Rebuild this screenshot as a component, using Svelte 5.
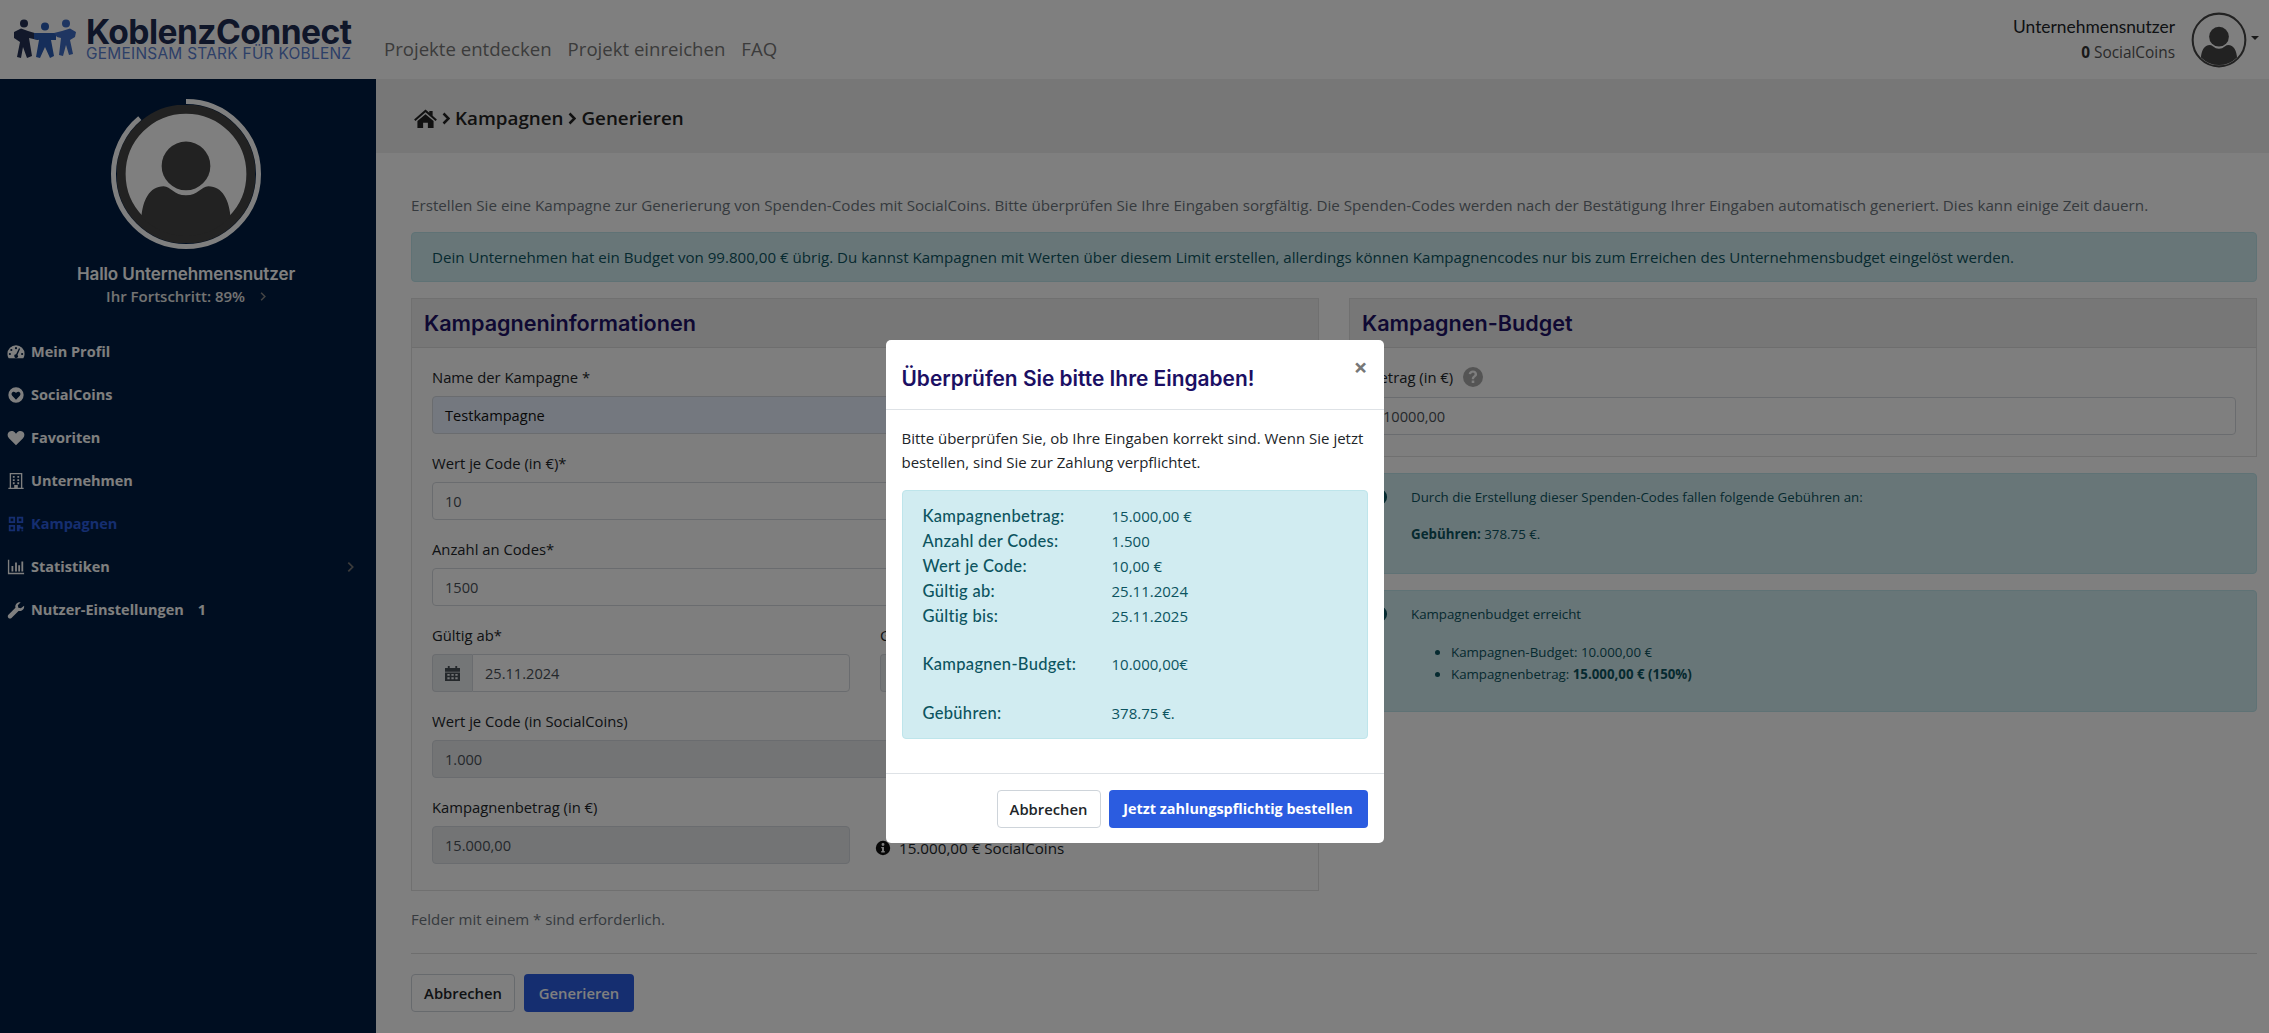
<script>
  const menu = [
    { label: 'Mein Profil', icon: 'gauge' },
    { label: 'SocialCoins', icon: 'coin' },
    { label: 'Favoriten', icon: 'heart' },
    { label: 'Unternehmen', icon: 'building' },
    { label: 'Kampagnen', icon: 'qr', active: true },
    { label: 'Statistiken', icon: 'chart', chevron: true },
    { label: 'Nutzer-Einstellungen', icon: 'wrench', badge: '1' }
  ];
  const summary = [
    ['Kampagnenbetrag:', '15.000,00 €'],
    ['Anzahl der Codes:', '1.500'],
    ['Wert je Code:', '10,00 €'],
    ['Gültig ab:', '25.11.2024'],
    ['Gültig bis:', '25.11.2025'],
    null,
    ['Kampagnen-Budget:', '10.000,00€'],
    null,
    ['Gebühren:', '378.75 €.']
  ];
</script>

{#snippet person(size, ring)}
  <svg width={size} height={size} viewBox="-68 -68 136 136" class="person">
    <defs>
      <clipPath id="pc{size}"><circle r="61" /></clipPath>
    </defs>
    <circle r="64" fill="#fff" stroke="#444" stroke-width={ring} />
    <g clip-path="url(#pc{size})" fill="#444">
      <circle cx="0" cy="-8" r="24" />
      <path d="M-44 44C-43 26 -36 12 -22 12C-15 12 -12 21 0 21C12 21 15 12 22 12C36 12 43 26 44 44L44 70L-44 70Z" />
    </g>
  </svg>
{/snippet}

{#snippet icon(name)}
  <svg class="mi" viewBox="0 0 20 20" fill="currentColor">
    {#if name === 'gauge'}
      <path fill-rule="evenodd" d="M10 2.5A9.5 9.5 0 0 0 .5 12c0 1.9.5 3.6 1.4 5h16.2c.9-1.4 1.4-3.1 1.4-5A9.500 9.500 0 0 0 10 2.500ZM10 4.500a1.200 1.200 0 1 1 0 2.400 1.200 1.200 0 0 1 0-2.400ZM4.800 6.600a1.200 1.200 0 1 1 0 2.400 1.200 1.200 0 0 1 0-2.400ZM3.200 11a1.200 1.200 0 1 1 0 2.400 1.200 1.200 0 0 1 0-2.400ZM16.800 11a1.200 1.200 0 1 1 0 2.400 1.200 1.200 0 0 1 0-2.400ZM14.600 6.400 11.600 13.200a2 2 0 1 1-1.500-.6l3.200-6.800Z" />
    {:else if name === 'coin'}
      <path fill-rule="evenodd" d="M10 1.500a8.500 8.500 0 1 1 0 17 8.500 8.500 0 0 1 0-17ZM10 15.200l4.200-4.400c1.100-1.200 1-3-.2-3.900-1.100-.8-2.600-.6-3.500.4l-.5.5-.5-.5c-.9-1-2.400-1.200-3.500-.4-1.200.9-1.300 2.700-.2 3.900Z" />
    {:else if name === 'heart'}
      <path d="M10 18 2.200 10.200C0 8 .2 4.600 2.400 3c2-1.400 4.600-1 6.200.7L10 5.200l1.400-1.500c1.600-1.700 4.200-2.100 6.200-.7 2.200 1.600 2.400 5 .2 7.200Z" />
    {:else if name === 'building'}
      <path fill-rule="evenodd" d="M3 1h14v16.500h1.500V19h-17v-1.500H3ZM4.500 2.500v15H8v-3h4v3h3.500v-15ZM6.500 4.500h2v2h-2ZM11.500 4.500h2v2h-2ZM6.500 8h2v2h-2ZM11.500 8h2v2h-2ZM6.500 11.500h2v2h-2ZM11.500 11.500h2v2h-2Z" />
    {:else if name === 'qr'}
      <path fill-rule="evenodd" d="M2 2h7v7H2ZM4 4v3h3V4ZM11 2h7v7h-7ZM13 4v3h3V4ZM2 11h7v7H2ZM4 13v3h3v-3ZM11 11h4v2h3v3h-2v-1h-2v3h-3ZM16 17h2v1h-2Z" />
    {:else if name === 'chart'}
      <path d="M1 2h1.500v14.500H19V18H1ZM5 9h2v6H5ZM9 5h2v10H9ZM12.500 8h2v7h-2ZM16 4h2v11h-2Z" />
    {:else if name === 'wrench'}
      <path d="M19 5.200c.3 1.600-.2 3.300-1.400 4.500-1.300 1.300-3.100 1.800-4.800 1.300L5 18.800c-.9.900-2.500.9-3.400 0-1-1-1-2.500 0-3.400l7.800-7.800c-.5-1.700 0-3.500 1.300-4.800C11.900 1.600 13.600 1.100 15.200 1.400L12 4.600l.6 2.800 2.800.6Z" />
    {/if}
  </svg>
{/snippet}

{#snippet chevron(cls)}
  <svg class={cls} viewBox="0 0 8 12" fill="none" stroke="currentColor" stroke-width="2"><path d="M1.500 1 6.500 6 1.500 11" /></svg>
{/snippet}

{#snippet infoIcon(cls)}
  <svg class={cls} viewBox="0 0 20 20" fill="currentColor">
    <path fill-rule="evenodd" d="M10 1a9 9 0 1 1 0 18 9 9 0 0 1 0-18ZM10 3.800a1.800 1.800 0 1 0 0 3.600 1.800 1.800 0 0 0 0-3.600ZM7.800 8.600v1.700h1v3.600h-1v1.700h4.400v-1.700h-1V8.600Z" />
  </svg>
{/snippet}

<div class="app">
  <header class="topbar">
    <div class="logo">
      <svg class="logo-mark" viewBox="0 0 62 40" width="62" height="40">
        <g fill="#243054">
          <circle cx="10" cy="4.500" r="4" />
          <path d="M0 13 7 9.500 14 12 24 15v6l-9-2 3 18-5 2-4-11-2 11-4-1 3-15-6-4Z" />
        </g>
        <g fill="#2a5cb4">
          <circle cx="31" cy="7.500" r="4" />
          <path d="M20 14 42 14v7l-5 0 3 16-4 2-5-11-5 11-4-1 3-17-5-1Z" />
        </g>
        <g fill="#3f6cc4">
          <circle cx="52" cy="4.500" r="4" />
          <path d="M40 14 48 12 56 9.500 62 13l-1 5-5 3 3 14-4 1-3-10-3 11-4-1 2-17-4-1Z" />
        </g>
      </svg>
      <div class="logo-text">
        <div class="logo-name">KoblenzConnect</div>
        <div class="logo-tag">GEMEINSAM STARK FÜR KOBLENZ</div>
      </div>
    </div>
    <nav class="topnav">
      <span>Projekte entdecken</span>
      <span>Projekt einreichen</span>
      <span>FAQ</span>
    </nav>
    <div class="user">
      <div class="user-text">
        <div class="user-name">Unternehmensnutzer</div>
        <div class="user-coins"><b>0</b> SocialCoins</div>
      </div>
      {@render person(56, 5)}
      <span class="caret"></span>
    </div>
  </header>

  <aside class="sidebar">
    <div class="profile">
      <div class="avatar">
        <svg class="progress" viewBox="0 0 150 150" width="150" height="150">
          <circle cx="75" cy="75" r="72.500" fill="none" stroke="#fff" stroke-width="5" pathLength="100" stroke-dasharray="89 11" transform="rotate(-90 75 75)" />
        </svg>
        {@render person(138, 9)}
      </div>
      <div class="hello">Hallo Unternehmensnutzer</div>
      <div class="progress-text">Ihr Fortschritt: 89% {@render chevron('prog-chev')}</div>
    </div>
    <ul class="menu">
      {#each menu as m}
        <li class:active={m.active}>
          {@render icon(m.icon)}
          <span>{m.label}</span>
          {#if m.badge}<span class="badge">{m.badge}</span>{/if}
          {#if m.chevron}{@render chevron('menu-chev')}{/if}
        </li>
      {/each}
    </ul>
  </aside>

  <main class="main">
    <div class="crumb">
      <svg class="home" viewBox="0 0 24 20" fill="currentColor"><path d="M12 0.500 16 4V2h3.500v5.200L24 11l-1.400 1.600L12 3.500 1.400 12.600 0 11ZM12 5.500l8.500 7.200V20H14.500v-5.500h-5V20H3.500v-7.300Z" /></svg>
      {@render chevron('crumb-chev')}
      <span>Kampagnen</span>
      {@render chevron('crumb-chev')}
      <span>Generieren</span>
    </div>
    <div class="content">
      <p class="desc">Erstellen Sie eine Kampagne zur Generierung von Spenden-Codes mit SocialCoins. Bitte überprüfen Sie Ihre Eingaben sorgfältig. Die Spenden-Codes werden nach der Bestätigung Ihrer Eingaben automatisch generiert. Dies kann einige Zeit dauern.</p>
      <div class="alert wide">Dein Unternehmen hat ein Budget von 99.800,00 € übrig. Du kannst Kampagnen mit Werten über diesem Limit erstellen, allerdings können Kampagnencodes nur bis zum Erreichen des Unternehmensbudget eingelöst werden.</div>
      <div class="cols">
        <div class="col">
          <section class="card">
            <h2>Kampagneninformationen</h2>
            <div class="card-body">
              <div class="field">
                <div class="lbl">Name der Kampagne *</div>
                <div class="input autofill">Testkampagne</div>
              </div>
              <div class="field">
                <div class="lbl">Wert je Code (in €)*</div>
                <div class="input">10</div>
              </div>
              <div class="field">
                <div class="lbl">Anzahl an Codes*</div>
                <div class="input">1500</div>
              </div>
              <div class="field two">
                <div>
                  <div class="lbl">Gültig ab*</div>
                  <div class="group">
                    <span class="prepend">
                      <svg viewBox="0 0 16 16" width="15" height="15" fill="currentColor"><path fill-rule="evenodd" d="M3 0h2v2h6V0h2v2h3v4H0V2h3ZM0 7h16v9H0ZM2.500 8.500v2h2.500v-2ZM6.800 8.500v2h2.500v-2ZM11 8.500v2h2.500v-2ZM2.500 12v2h2.500v-2ZM6.800 12v2h2.500v-2ZM11 12v2h2.500v-2Z" /></svg>
                    </span>
                    <div class="input">25.11.2024</div>
                  </div>
                </div>
                <div>
                  <div class="lbl">Gültig bis*</div>
                  <div class="group">
                    <span class="prepend"></span>
                    <div class="input"></div>
                  </div>
                </div>
              </div>
              <div class="field">
                <div class="lbl">Wert je Code (in SocialCoins)</div>
                <div class="input disabled">1.000</div>
              </div>
              <div class="field two last">
                <div>
                  <div class="lbl">Kampagnenbetrag (in €)</div>
                  <div class="input disabled">15.000,00</div>
                </div>
                <div class="coins-note">
                  {@render infoIcon('note-icon')}
                  <span>15.000,00 € SocialCoins</span>
                </div>
              </div>
            </div>
          </section>
        </div>
        <div class="col">
          <section class="card">
            <h2>Kampagnen-Budget</h2>
            <div class="card-body side">
              <div class="lbl with-help">
                Betrag (in €)
                <svg viewBox="0 0 20 20" width="20" height="20" fill="#a8a8a8"><path fill-rule="evenodd" d="M10 0a10 10 0 1 1 0 20 10 10 0 0 1 0-20ZM10 3.500c-2.500 0-4 1.300-4.300 3.400l2.300.4c.2-1 .8-1.600 1.900-1.600 1 0 1.700.5 1.700 1.400 0 .8-.5 1.200-1.300 1.800-1 .7-1.500 1.400-1.500 2.800v.6h2.300v-.4c0-.8.300-1.100 1.100-1.700 1-.7 1.900-1.500 1.900-2.900 0-2.300-1.800-3.800-4.100-3.800ZM8.700 13.500v2.500h2.600v-2.500Z" /></svg>
              </div>
              <div class="input">10000,00</div>
            </div>
          </section>
          <div class="alert note fee">
            {@render infoIcon('alert-icon')}
            <div>
              <p>Durch die Erstellung dieser Spenden-Codes fallen folgende Gebühren an:</p>
              <p><b>Gebühren:</b> 378.75 €.</p>
            </div>
          </div>
          <div class="alert note reach">
            {@render infoIcon('alert-icon')}
            <div>
              <p>Kampagnenbudget erreicht</p>
              <ul>
                <li>Kampagnen-Budget: 10.000,00 €</li>
                <li>Kampagnenbetrag: <b>15.000,00 € (150%)</b></li>
              </ul>
            </div>
          </div>
        </div>
      </div>
      <p class="hint">Felder mit einem * sind erforderlich.</p>
      <hr />
      <div class="actions">
        <span class="btn outline">Abbrechen</span>
        <span class="btn primary">Generieren</span>
      </div>
    </div>
  </main>
</div>

<div class="backdrop">
  <div class="modal">
    <div class="modal-head">
      <h3>Überprüfen Sie bitte Ihre Eingaben!</h3>
      <span class="close">×</span>
    </div>
    <div class="modal-body">
      <p>Bitte überprüfen Sie, ob Ihre Eingaben korrekt sind. Wenn Sie jetzt bestellen, sind Sie zur Zahlung verpflichtet.</p>
      <div class="summary">
        {#each summary as row}
          {#if row}
            <div class="row"><span class="k">{row[0]}</span><span class="v">{row[1]}</span></div>
          {:else}
            <div class="spacer"></div>
          {/if}
        {/each}
      </div>
    </div>
    <div class="modal-foot">
      <span class="btn outline">Abbrechen</span>
      <span class="btn primary strong">Jetzt zahlungspflichtig bestellen</span>
    </div>
  </div>
</div>

<style>
  :global(body) {
    margin: 0;
    font-family: "Open Sans", "Noto Sans", sans-serif;
    color: #212529;
    background: #fff;
  }
  .app {
    width: 2269px;
    height: 1033px;
    overflow: hidden;
    display: grid;
    grid-template-columns: 376px 1fr;
    grid-template-rows: 79px 1fr;
    font-size: 14.8px;
  }
  .topbar {
    grid-column: 1 / 3;
    display: flex;
    background: #fff;
    position: relative;
  }
  .logo {
    display: flex;
    padding: 15px 0 0 14px;
    width: 352px;
    box-sizing: border-box;
    flex: none;
  }
  .logo-mark { margin-top: 4px; flex: none; }
  .logo-text { margin-left: 10px; }
  .logo-name {
    font-family: Inter, sans-serif;
    font-weight: 700;
    font-size: 33.6px;
    line-height: 33px;
    letter-spacing: -0.55px;
    color: #1e2c52;
    white-space: nowrap;
  }
  .logo-tag {
    font-family: Inter, sans-serif;
    font-size: 15.4px;
    line-height: 12px;
    letter-spacing: 0.28px;
    color: #5a80d0;
    white-space: nowrap;
  }
  .topnav {
    display: flex;
    gap: 16px;
    padding: 37px 0 0 32px;
    font-size: 18.6px;
    line-height: 24px;
    color: #777;
    font-weight: 500;
  }
  .user {
    margin-left: auto;
    display: flex;
    align-items: center;
    padding-right: 10px;
    position: relative;
  }
  .user-text {
    text-align: right;
    font-family: Lato, sans-serif;
    font-size: 17.4px;
    line-height: 26px;
    margin-right: 16px;
  }
  .user-coins { font-family: "Open Sans", sans-serif; font-size: 15.400px; color: #555; }
  .user-coins b { color: #333; }
  .caret {
    width: 0;
    height: 0;
    border: 4px solid transparent;
    border-top-color: #333;
    border-bottom: 0;
    margin: -4px 0 0 4px;
  }
  .person { display: block; }

  .sidebar {
    background: #011d42;
    color: #fff;
  }
  .profile {
    text-align: center;
    padding: 20px 4px 0 0;
    height: 241px;
    box-sizing: border-box;
  }
  .avatar {
    position: relative;
    width: 150px;
    height: 150px;
    margin: 0 auto;
    display: flex;
    align-items: center;
    justify-content: center;
  }
  .progress { position: absolute; inset: 0; }
  .hello {
    margin-top: 14px;
    font-family: Inter, sans-serif;
    font-weight: 600;
    font-size: 17px;
    line-height: 22px;
    letter-spacing: -0.1px;
  }
  .progress-text {
    font-size: 15px;
    font-weight: 600;
    line-height: 22px;
    color: #e6e6e6;
  }
  .prog-chev { width: 6px; height: 11px; margin-left: 11px; color: #888; }
  .menu {
    list-style: none;
    margin: 0;
    padding: 10px 0 0 0;
  }
  .menu li {
    height: 43px;
    display: flex;
    align-items: center;
    font-size: 14.500px;
    font-weight: 700;
    color: #fff;
    padding-left: 7px;
    position: relative;
  }
  .menu li.active { color: #2b5ce0; }
  .mi { width: 18px; height: 18px; margin-right: 6px; flex: none; }
  .badge { margin-left: 14px; }
  .menu-chev { position: absolute; right: 22px; width: 7px; height: 12px; color: #777; }

  .main { background: #fff; min-width: 0; }
  .crumb {
    height: 74px;
    background: #eee;
    display: flex;
    align-items: center;
    padding: 4px 0 0 38px;
    box-sizing: border-box;
    font-size: 18.800px;
    font-weight: 600;
    color: #222;
  }
  .home { width: 23px; height: 19px; }
  .crumb-chev { width: 8px; height: 13px; margin: 0 5px 0 5px; stroke-width: 2.500; }
  .content { padding: 40px 12px 0 35px; }
  .desc {
    margin: 0 0 15px;
    line-height: 24px;
    color: #6c757d;
    white-space: nowrap;
    font-size: 15.200px;
  }
  .alert {
    background: #d1ecf1;
    border: 1px solid #bee5eb;
    border-radius: 4px;
    color: #0c5460;
    box-sizing: border-box;
  }
  .alert.wide {
    height: 50px;
    padding: 12px 20px;
    line-height: 24px;
    margin-bottom: 16px;
    white-space: nowrap;
    font-size: 15.100px;
  }
  .cols {
    display: grid;
    grid-template-columns: 908px 908px;
    gap: 30px;
  }
  .card {
    border: 1px solid #e0e0e0;
    background: #fcfcfc;
  }
  .card h2 {
    margin: 0;
    height: 48px;
    line-height: 48px;
    padding: 0 12px;
    background: #eee;
    border-bottom: 1px solid #dcdcdc;
    font-family: Inter, sans-serif;
    font-weight: 600;
    font-size: 21.600px;
    color: #1e1266;
    box-sizing: content-box;
  }
  .card-body { padding: 17px 20px 9px; }
  .card-body.side { padding-bottom: 21px; }
  .field { margin-bottom: 17px; }
  .lbl {
    height: 24px;
    line-height: 24px;
    margin-bottom: 7px;
    white-space: nowrap;
  }
  .with-help {
    display: flex;
    align-items: center;
    gap: 10px;
    height: 24px;
    margin-bottom: 8px;
  }
  .input {
    height: 38px;
    line-height: 36px;
    box-sizing: border-box;
    border: 1px solid #d5d9de;
    border-radius: 4px;
    padding: 0 12px;
    color: #495057;
    background: #fff;
    flex: 1;
    font-size: 14.600px;
  }
  .input.autofill { background: #e8f0fe; color: #111; }
  .input.disabled { background: #e6e8eb; }
  .two {
    display: grid;
    grid-template-columns: 418px 418px;
    gap: 30px;
  }
  .group { display: flex; }
  .prepend {
    width: 40px;
    height: 38px;
    box-sizing: border-box;
    background: #e9ecef;
    border: 1px solid #d5d9de;
    border-right: 0;
    border-radius: 4px 0 0 4px;
    display: flex;
    align-items: center;
    justify-content: center;
    color: #495057;
  }
  .group .input { border-radius: 0 4px 4px 0; }
  .coins-note {
    display: flex;
    align-items: center;
    align-self: end;
    height: 38px;
    padding-top: 5px;
    box-sizing: border-box;
    gap: 8px;
    margin-left: -5px;
    font-size: 15.200px;
    white-space: nowrap;
  }
  .note-icon { width: 16px; height: 16px; color: #111; flex: none; }
  .hint {
    margin: 16px 0 0;
    line-height: 24px;
    color: #6c757d;
    font-size: 15px;
  }
  hr {
    border: 0;
    border-top: 1px solid #ddd;
    margin: 22px 0 20px;
  }
  .actions { display: flex; gap: 9px; }
  .btn {
    height: 38px;
    box-sizing: border-box;
    border-radius: 4px;
    display: inline-flex;
    align-items: center;
    justify-content: center;
    font-weight: 600;
    font-size: 14.800px;
    white-space: nowrap;
  }
  .btn.outline {
    border: 1px solid #ced4da;
    background: #fff;
    color: #212529;
    width: 104px;
  }
  .btn.primary {
    background: #2b5ce0;
    color: #fff;
    width: 110px;
  }
  .btn.strong { width: 259px; font-weight: 700; font-size: 14.400px; }
  .note {
    margin-top: 16px;
    display: flex;
    font-size: 13.300px;
    line-height: 20px;
    padding: 13px 20px 0;
  }
  .note.fee { height: 101px; }
  .note.reach { height: 122px; }
  .note p { margin: 0 0 17px; }
  .note ul { margin: 0; padding-left: 40px; line-height: 22px; }
  .alert-icon { width: 18px; height: 18px; flex: none; margin: 1px 23px 0 0; }

  .backdrop {
    position: fixed;
    inset: 0;
    background: rgba(0, 0, 0, 0.5);
    display: flex;
    justify-content: center;
    align-items: flex-start;
    padding-top: 340px;
    box-sizing: border-box;
  }
  .modal {
    width: 498px;
    background: #fff;
    border-radius: 5px;
    height: 503px;
    display: flex;
    flex-direction: column;
    font-size: 15px;
  }
  .modal-head {
    height: 70px;
    box-sizing: border-box;
    border-bottom: 1px solid #dee2e6;
    padding: 0 16px;
    position: relative;
    display: flex;
    align-items: center;
  }
  .modal-head h3 {
    margin: 8px 0 0;
    font-family: Inter, sans-serif;
    font-weight: 600;
    font-size: 20.900px;
    color: #1b0f63;
    white-space: nowrap;
  }
  .close {
    position: absolute;
    right: 16px;
    top: 13px;
    font-size: 24px;
    line-height: 28px;
    font-weight: 700;
    color: #777;
  }
  .modal-body {
    flex: 1;
    padding: 16px 16px 0;
  }
  .modal-body p {
    margin: 0 0 16px;
    line-height: 24px;
    color: #212529;
  }
  .summary {
    background: #d1ecf1;
    border: 1px solid #bee5eb;
    border-radius: 4px;
    padding: 12px 20px;
    height: 249px;
    box-sizing: border-box;
    color: #0c5460;
  }
  .row { display: flex; height: 25px; align-items: center; }
  .spacer { height: 23.500px; }
  .k {
    width: 189px;
    font-family: Lato, sans-serif;
    font-weight: 500;
    font-size: 16.500px;
    letter-spacing: 0.3px;
    white-space: nowrap;
  }
  .v { font-size: 15px; }
  .modal-foot {
    height: 70px;
    box-sizing: border-box;
    border-top: 1px solid #dee2e6;
    display: flex;
    justify-content: flex-end;
    align-items: center;
    gap: 8px;
    padding: 0 16px;
  }
</style>
